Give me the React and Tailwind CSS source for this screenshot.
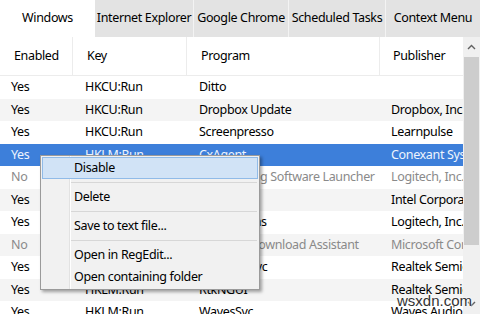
import React from "react";

const TABS = [
  { label: "Windows", w: "w-[95px]", active: true },
  { label: "Internet Explorer", w: "w-[98px]" },
  { label: "Google Chrome", w: "w-[95px]" },
  { label: "Scheduled Tasks", w: "w-[97px]" },
  { label: "Context Menu", w: "flex-1" },
];

const ROWS = [
  ["Yes", "HKCU:Run", "Ditto", ""],
  ["Yes", "HKCU:Run", "Dropbox Update", "Dropbox, Inc."],
  ["Yes", "HKCU:Run", "Screenpresso", "Learnpulse"],
  ["Yes", "HKLM:Run", "CxAgent", "Conexant Systems, Inc."],
  ["No", "HKLM:Run", "LGS Gaming Software Launcher", "Logitech, Inc."],
  ["Yes", "HKLM:Run", "IAStorIcon", "Intel Corporation"],
  ["Yes", "HKLM:Run", "LogiOptions", "Logitech, Inc."],
  ["No", "HKLM:Run", "Logitech Download Assistant", "Microsoft Corporation"],
  ["Yes", "HKLM:Run", "RtkAudioSvc", "Realtek Semiconductor"],
  ["Yes", "HKLM:Run", "RtkNGUI", "Realtek Semiconductor"],
  ["Yes", "HKLM:Run", "WavesSvc", "Waves Audio Ltd."],
];

const MENU = ["Disable", "-", "Delete", "-", "Save to text file...", "-", "Open in RegEdit...", "Open containing folder"];

function Chevron({ up }) {
  return (
    <svg width="9" height="6" viewBox="0 0 9 6" className="text-[#606060]">
      <polyline
        points={up ? "1,5 4.5,1.5 8,5" : "1,1 4.5,4.5 8,1"}
        fill="none"
        stroke="currentColor"
        strokeWidth="1.4"
      />
    </svg>
  );
}

export default function App() {
  return (
    <div className="relative w-[480px] h-[314px] overflow-hidden bg-white text-[12.5px] tracking-[-0.35px] text-black font-['Noto_Sans','Liberation_Sans',sans-serif]">
      {/* Tabs */}
      <div className="flex h-[37px] bg-[#e3e3e3]">
        {TABS.map((t, i) => (
          <div
            key={t.label}
            className={`${t.w} flex items-center justify-center whitespace-nowrap ${
              t.active ? "bg-white" : "bg-[#e3e3e3]"
            } ${i > 1 ? "border-l border-[#f3f3f3]" : ""}`}
          >
            {t.label}
          </div>
        ))}
      </div>

      <div className="flex h-[277px]">
        {/* Table */}
        <div className="w-[463px] overflow-hidden">
          <div className="flex h-[39px] border-b border-[#ececec] items-center">
            <div className="w-[73px] h-full flex items-center pl-[14px] border-r border-[#ececec]">Enabled</div>
            <div className="w-[114px] h-full flex items-center pl-[14px] border-r border-[#ececec]">Key</div>
            <div className="w-[193px] h-full flex items-center pl-[14px] border-r border-[#ececec]">Program</div>
            <div className="flex-1 h-full flex items-center pl-[13px]">Publisher</div>
          </div>
          {ROWS.map((r, i) => {
            const selected = i === 3;
            const bg = selected ? "bg-[#3d7fda]" : i % 2 ? "bg-[#f4f4f4]" : "bg-white";
            const color = selected ? "text-[#eef4fd]" : r[0] === "No" ? "text-[#8a8a8a]" : "text-black";
            return (
              <div key={i} className={`flex h-[22.5px] pt-px items-center whitespace-nowrap ${bg} ${color}`}>
                <div className="w-[73px] pl-[11px] overflow-hidden">{r[0]}</div>
                <div className="w-[114px] pl-[12px] overflow-hidden">{r[1]}</div>
                <div className="w-[193px] pl-[12px] overflow-hidden">{r[2]}</div>
                <div className="flex-1 pl-[11px] overflow-hidden">{r[3]}</div>
              </div>
            );
          })}
        </div>

        {/* Scrollbar */}
        <div className="w-[17px] bg-[#f0f0f0] flex flex-col">
          <div className="h-[20px] flex items-center justify-center">
            <Chevron up />
          </div>
          <div className="h-[188px] bg-[#cdcdcd] mx-[1px]" />
          <div className="flex-1" />
          <div className="h-[20px] flex items-center justify-center">
            <Chevron />
          </div>
        </div>
      </div>

      {/* Context menu */}
      <div className="absolute left-[40px] top-[155px] w-[220px] bg-[#f1f1f1] border border-[#9a9a9a] py-[1px] shadow-[2px_2px_3px_rgba(0,0,0,0.35)]">
        <div className="absolute left-[28px] top-0 bottom-0 w-px bg-[#e2e2e2]" />
        <div className="absolute left-[29px] top-0 bottom-0 w-px bg-white" />
        {MENU.map((m, i) =>
          m === "-" ? (
            <div key={i} className="h-[7px] flex items-center pl-[30px] pr-[2px]">
              <div className="w-full h-px bg-[#d7d7d7]" />
            </div>
          ) : (
            <div
              key={i}
              className={`relative h-[22px] mx-[1px] pt-px flex items-center pl-[31px] ${
                i === 0 ? "bg-[#d1e3f6] border border-[#90bbe8]" : "border border-transparent"
              }`}
            >
              {m}
            </div>
          )
        )}
      </div>

      {/* Watermark */}
      <div className="absolute left-[397px] top-[290px] text-[15px] tracking-normal text-[#333] font-['Liberation_Sans',sans-serif] [text-shadow:0_0_2px_#fff,0_0_2px_#fff]">
        wsxdn.com
      </div>
    </div>
  );
}
